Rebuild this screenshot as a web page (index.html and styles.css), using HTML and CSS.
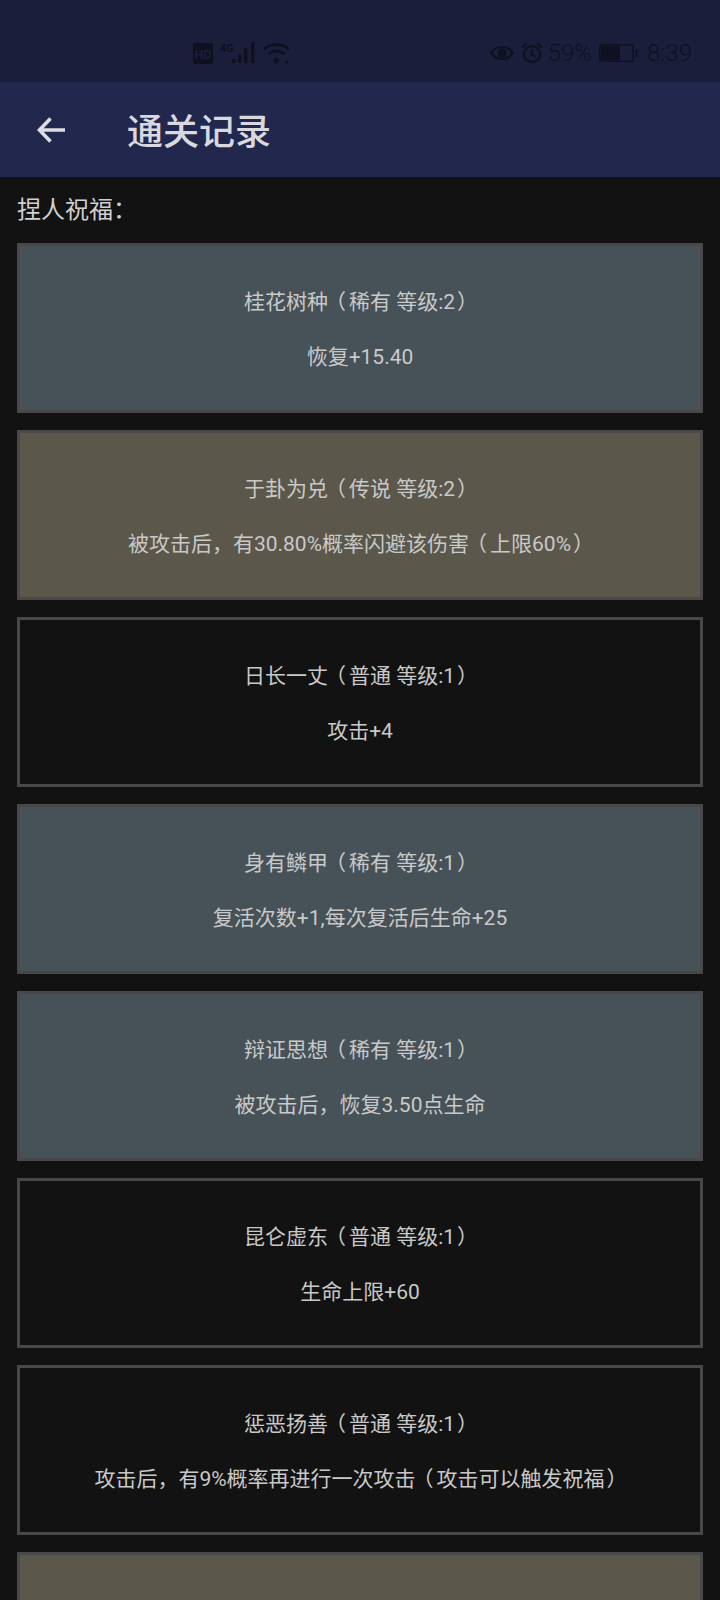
FILE: index.html
```html
<!DOCTYPE html>
<html lang="zh">
<head>
  <meta charset="UTF-8">
  <title>通关记录</title>
  <link rel="stylesheet" href="styles.css">
</head>
<body>
  <div class="status-bar">
    <div class="status-center">
      <svg width="20" height="21" viewBox="0 0 20 21"><rect width="20" height="21" rx="2" fill="#0f1120"/><text x="10" y="15.500" text-anchor="middle" class="hd-text">HD</text></svg>
      <svg width="36" height="22" viewBox="0 0 36 22">
        <text x="0" y="10" class="net-text">4G</text>
        <g fill="#0f1120"><rect x="12" y="17" width="3.500" height="4"/><rect x="18" y="12" width="3.500" height="9"/><rect x="24" y="6" width="3.500" height="15"/><rect x="31" y="0" width="3.500" height="21"/></g>
      </svg>
      <svg width="27" height="22" viewBox="0 0 27 22" fill="none" stroke="#0f1120" stroke-width="2.600">
        <path d="M1 7.500C7.500 1 19.500 1 26 7.500"/>
        <path d="M5.500 12C10 8 17 8 21.500 12"/>
        <circle cx="13.500" cy="18.500" r="2.800" fill="#0f1120" stroke="none"/>
        <circle cx="23.500" cy="20" r="1.400" fill="#0f1120" stroke="none"/>
      </svg>
    </div>
    <div class="status-right">
      <svg class="eye" width="24" height="18" viewBox="0 0 24 18" fill="none" stroke="#0f1120" stroke-width="2.200"><path d="M1.200 9C6 1 18 1 22.800 9C18 17 6 17 1.200 9Z"/><circle cx="12" cy="9" r="4.500" fill="#0f1120" stroke="none"/></svg>
      <svg class="alarm" width="22" height="22" viewBox="0 0 22 22" fill="none" stroke="#0f1120" stroke-width="2.200"><circle cx="11" cy="12" r="8"/><path d="M11 7.500V12.500L14.500 14.500M1 5.500L5.500 1.500M21 5.500L16.500 1.500"/></svg>
      <span class="status-text">59%</span>
      <svg class="battery" width="39" height="18" viewBox="0 0 39 18"><rect x="0.800" y="0.800" width="33.400" height="16.400" rx="2" fill="none" stroke="#0f1120" stroke-width="1.500"/><rect x="2" y="2" width="19" height="14" fill="#0f1120"/><rect x="36.500" y="5" width="2" height="8" fill="#0f1120"/></svg>
      <span class="status-text">8:39</span>
    </div>
  </div>

  <header class="app-bar">
    <svg class="back" width="30" height="28" viewBox="0 0 30 28" fill="none" stroke="#dcdce2" stroke-width="3.600"><path d="M29 14H4M14.500 2.500L3.500 14L14.500 25.500"/></svg>
    <h1>通关记录</h1>
  </header>

  <main class="content">
    <p class="section-title">捏人祝福：</p>

    <div class="bless rare">
      <p>桂花树种<span class="po">（</span>稀有 等级:2<span class="pc">）</span></p>
      <p>恢复+15.40</p>
    </div>
    <div class="bless legend">
      <p>于卦为兑<span class="po">（</span>传说 等级:2<span class="pc">）</span></p>
      <p>被攻击后，有30.80%概率闪避该伤害<span class="po">（</span>上限60%<span class="pc">）</span></p>
    </div>
    <div class="bless">
      <p>日长一丈<span class="po">（</span>普通 等级:1<span class="pc">）</span></p>
      <p>攻击+4</p>
    </div>
    <div class="bless rare">
      <p>身有鳞甲<span class="po">（</span>稀有 等级:1<span class="pc">）</span></p>
      <p>复活次数+1,每次复活后生命+25</p>
    </div>
    <div class="bless rare">
      <p>辩证思想<span class="po">（</span>稀有 等级:1<span class="pc">）</span></p>
      <p>被攻击后，恢复3.50点生命</p>
    </div>
    <div class="bless">
      <p>昆仑虚东<span class="po">（</span>普通 等级:1<span class="pc">）</span></p>
      <p>生命上限+60</p>
    </div>
    <div class="bless">
      <p>惩恶扬善<span class="po">（</span>普通 等级:1<span class="pc">）</span></p>
      <p>攻击后，有9%概率再进行一次攻击<span class="po">（</span>攻击可以触发祝福<span class="pc">）</span></p>
    </div>
    <div class="bless legend"></div>
  </main>
</body>
</html>
```

FILE: styles.css
```css
html, body {
  margin: 0;
  height: 1600px;
  overflow: hidden;
}
body {
  background: #121212;
  color: #c9c9c9;
  font-family: "Roboto", "Noto Sans CJK SC", sans-serif;
}
.status-bar {
  height: 82px;
  box-sizing: border-box;
  background: #1a1e3b;
  display: flex;
  align-items: center;
  justify-content: space-between;
  padding: 24px 28px 0 193px;
  color: #0f1120;
}
.status-center {
  display: flex;
  align-items: flex-end;
  gap: 7px;
}
.hd-text {
  font: 700 13px "Roboto", sans-serif;
  fill: #1a1e3b;
}
.net-text {
  font: 700 11px "Roboto", sans-serif;
  fill: #0f1120;
}
.status-right {
  display: flex;
  align-items: center;
  gap: 9px;
}
.eye {
  margin-right: -2px;
}
.alarm {
  margin-right: -4px;
}
.battery {
  margin-left: -2px;
}
.status-text {
  font-size: 24px;
  font-weight: 300;
}
.app-bar {
  height: 95px;
  background: #22274d;
  display: flex;
  align-items: center;
  padding-left: 36px;
}
.back {
  margin-right: 61px;
}
.app-bar h1 {
  margin: 0 0 2px;
  font-size: 36px;
  font-weight: 500;
  color: #d8d8de;
}
.content {
  padding: 0 17px;
}
.section-title {
  margin: 0;
  height: 66px;
  line-height: 66px;
  font-size: 24px;
  color: #d0d0d0;
}
.bless {
  height: 170px;
  box-sizing: border-box;
  border: 3px solid #484848;
  margin-bottom: 17px;
  text-align: center;
  font-size: 21px;
  padding-top: 41px;
}
.bless p {
  margin: 0 0 25px;
  line-height: 30px;
}
/* fullwidth brackets sit centred in their cell on the device font */
.po {
  margin: 0 3px 0 -3px;
}
.pc {
  margin: 0 -2px 0 2px;
}
.rare {
  background: #465258;
}
.legend {
  background: #5b574b;
}
```
